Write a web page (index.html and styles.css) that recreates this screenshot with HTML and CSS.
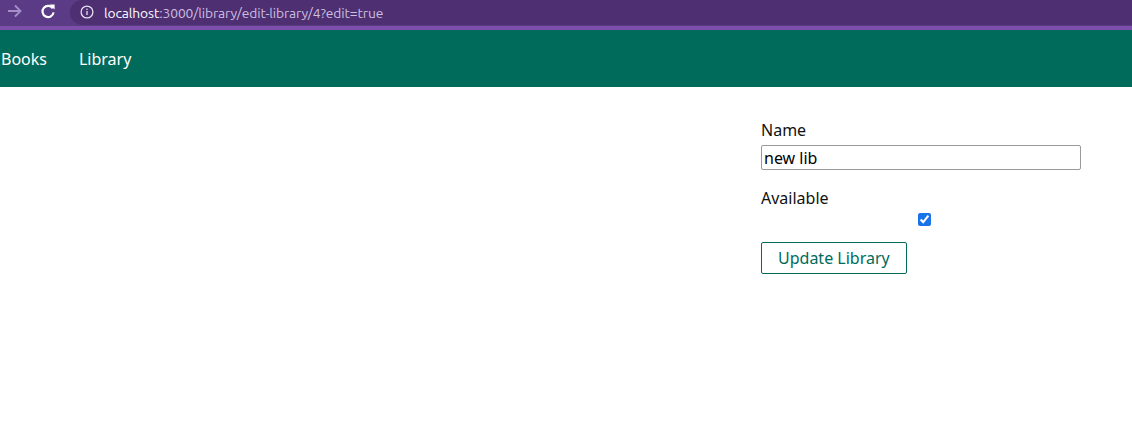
FILE: index.html
```html
<!DOCTYPE html>
<html>
<head>
<meta charset="utf-8">
<link rel="stylesheet" href="styles.css">
</head>
<body>
<div class="chrome">
  <div class="toolbar">
    <svg class="ico fwd" width="16" height="16" viewBox="0 0 16 16"><path d="M1 8h13M8 2.5L13.5 8 8 13.5" fill="none" stroke="#a58fc8" stroke-width="1.8"/></svg>
    <svg class="ico reload" width="16" height="16" viewBox="0 0 16 16"><path d="M12.8 5.4A5.6 5.6 0 1 0 13.6 9.4" fill="none" stroke="#fff" stroke-width="2.2"/><path d="M9.4 1.4h5.2v5.2z" fill="#fff"/></svg>
    <div class="omnibox">
      <svg class="info" width="14" height="14" viewBox="0 0 14 14"><circle cx="7" cy="7" r="5.9" fill="none" stroke="#e6e0ee" stroke-width="1.3"/><rect x="6.35" y="6" width="1.3" height="4" fill="#e6e0ee"/><rect x="6.35" y="3.6" width="1.3" height="1.3" fill="#e6e0ee"/></svg>
      <span class="host">localhost</span><span class="path">:3000/library/edit-library/4?edit=true</span>
    </div>
  </div>
  <div class="strip"></div>
</div>
<nav class="nav">
  <a class="nav-link">Books</a>
  <a class="nav-link">Library</a>
</nav>
<main class="main">
  <form class="form">
    <label class="label">Name</label>
    <input class="text-input" type="text" value="new lib">
    <label class="label label-avail">Available</label>
    <div class="check-row"><input class="check" type="checkbox" checked></div>
    <button class="btn" type="button">Update Library</button>
  </form>
</main>
</body>
</html>
```
FILE: styles.css
```css
html, body {
  margin: 0;
  padding: 0;
  background: #fff;
}
body {
  font-family: "Noto Sans", "Open Sans", sans-serif;
  font-size: 16px;
  color: #111;
}
.chrome {
  background: #5b3b86;
}
.toolbar {
  height: 26px;
  display: flex;
  align-items: center;
  position: relative;
}
.ico {
  flex: none;
}
.fwd {
  margin-left: 7px;
  margin-top: -4px;
}
.reload {
  margin-left: 17px;
  margin-top: -4px;
}
.omnibox {
  margin-left: 14px;
  flex: 1;
  height: 25px;
  align-self: flex-start;
  background: #4d2f72;
  border-radius: 0 0 0 14px;
  border-top-left-radius: 14px;
  display: flex;
  align-items: center;
  font-family: "Ubuntu", "Noto Sans", sans-serif;
  font-size: 13.8px;
  letter-spacing: -0.1px;
}
.info {
  margin-left: 10px;
  margin-right: 10px;
  margin-top: -1px;
}
.host {
  color: #ffffff;
}
.path {
  color: #cdbfe0;
}
.strip {
  height: 4px;
  background: #7c4fab;
}
.nav {
  height: 57px;
  background: #006b5b;
  display: flex;
  align-items: center;
  gap: 32px;
  padding-left: 1px;
}
.nav-link {
  color: #fff;
  font-size: 16px;
  cursor: pointer;
}
.main {
  display: flex;
  justify-content: flex-start;
  padding-left: 761px;
  padding-top: 32px;
}
.form {
  display: flex;
  flex-direction: column;
  align-items: flex-start;
  width: 320px;
}
.label {
  line-height: 22px;
  color: #111;
}
.text-input {
  margin-top: 4px;
  width: 320px;
  height: 25px;
  box-sizing: border-box;
  border: 1px solid #9a9a9a;
  border-radius: 2px;
  padding: 0 2px;
  font-family: "Noto Sans", sans-serif;
  font-size: 16px;
  color: #000;
  outline: none;
}
.label-avail {
  margin-top: 17px;
}
.check-row {
  width: 320px;
  height: 14px;
  margin-top: 0;
}
.check {
  margin: 0 0 0 157px;
  width: 13px;
  height: 13px;
  accent-color: #1a73e8;
}
.btn {
  margin-top: 19px;
  height: 32px;
  padding: 0 16px;
  background: #fff;
  border: 1px solid #006b5b;
  border-radius: 2px;
  color: #006b5b;
  font-family: "Noto Sans", sans-serif;
  font-size: 16px;
}
```
